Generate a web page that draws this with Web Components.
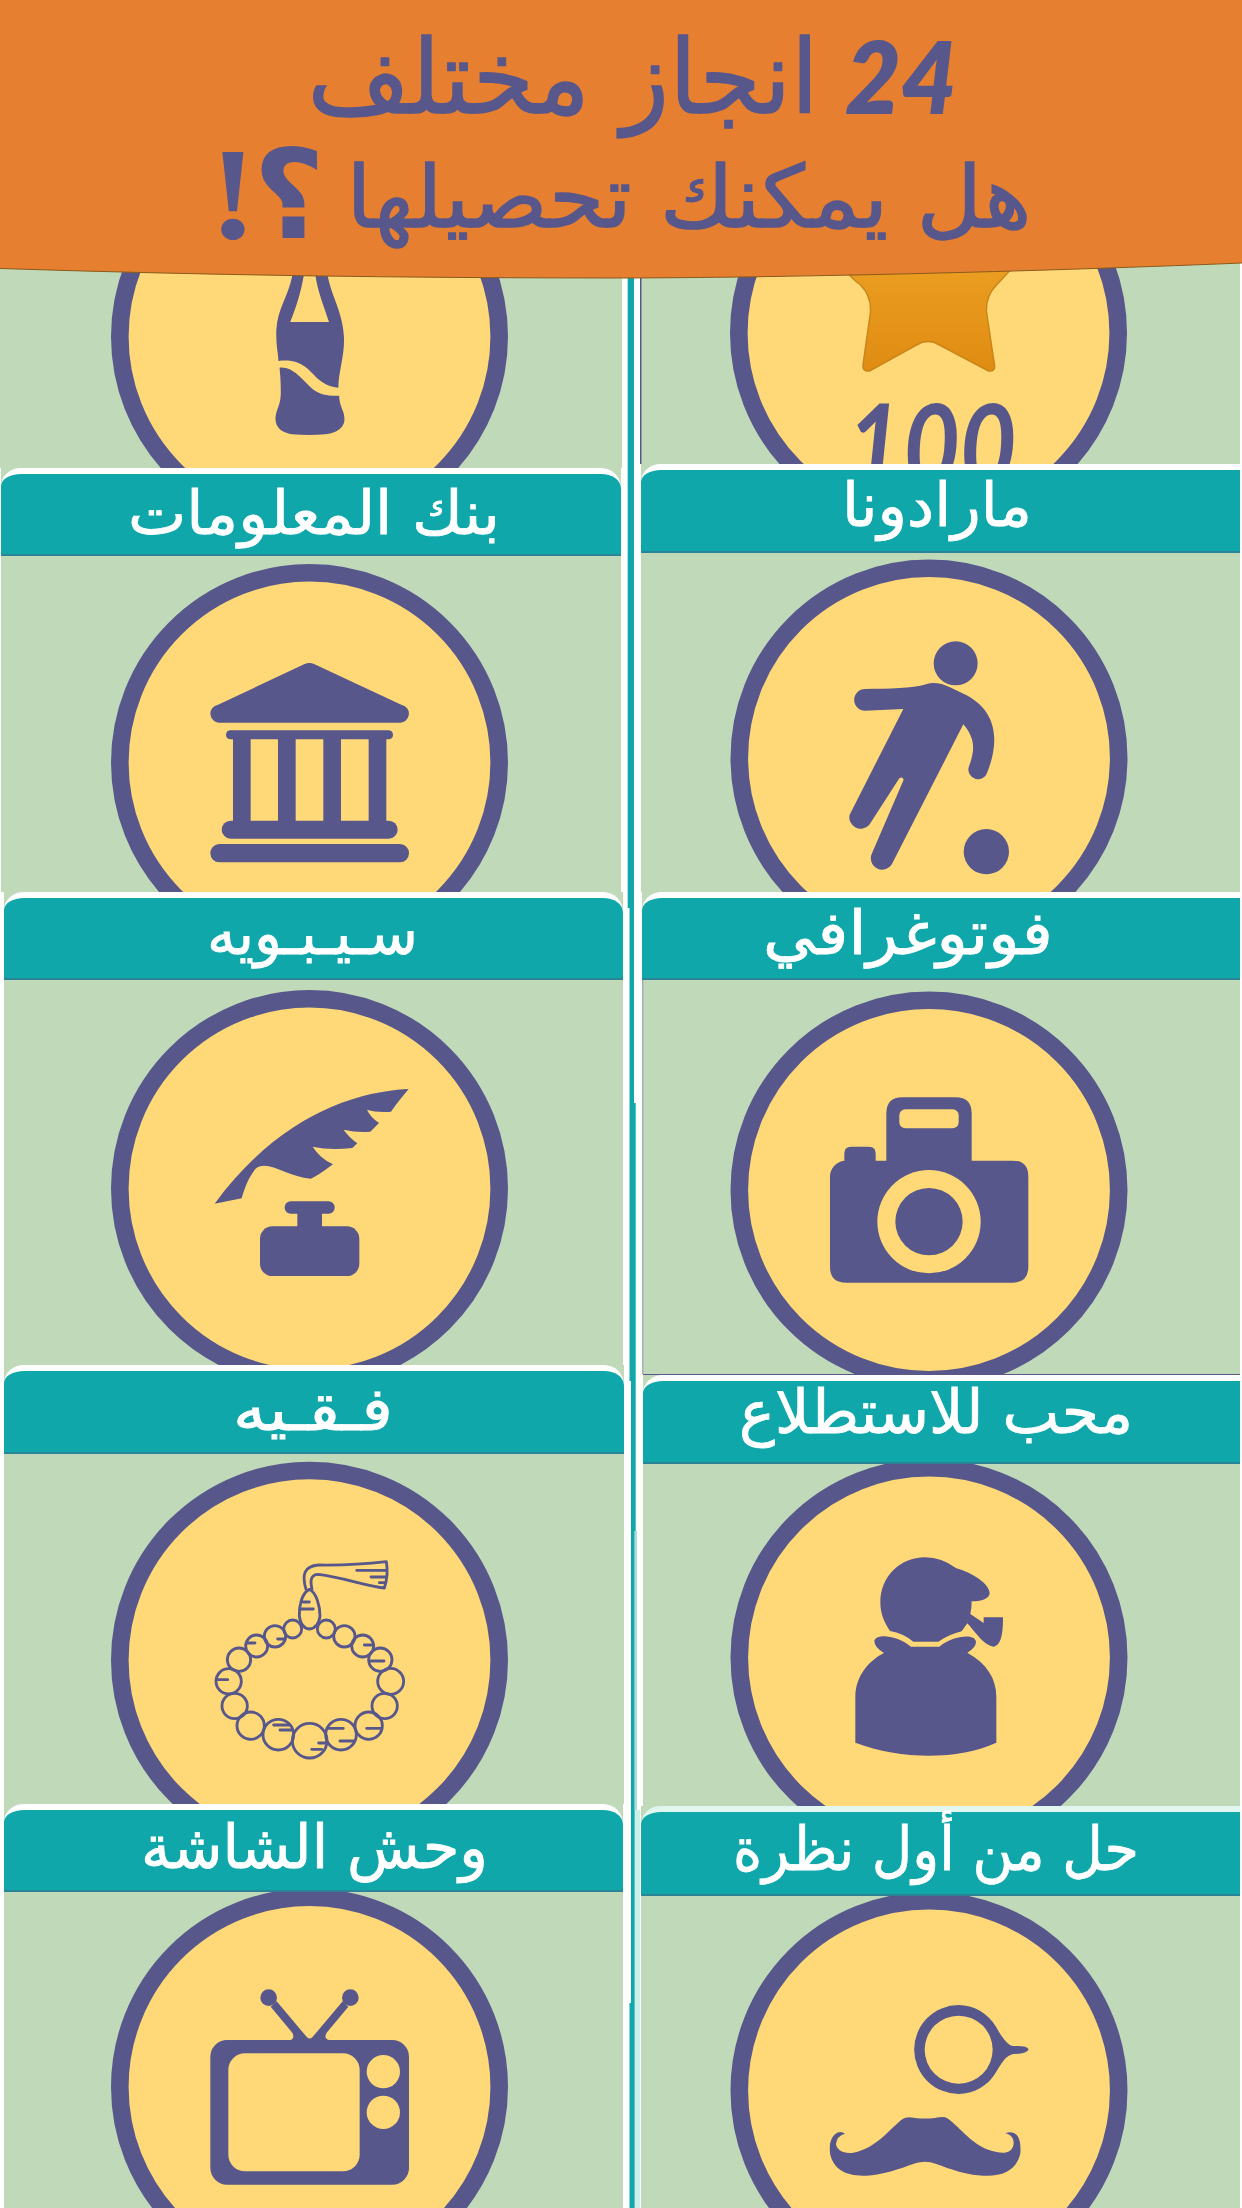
<!DOCTYPE html>
<html lang="ar">
<head>
<meta charset="utf-8">
<title>24 انجاز مختلف</title>
<style>
html,body{margin:0;padding:0;width:1242px;height:2208px;overflow:hidden;background:#fff}
body{font-family:"DejaVu Sans","Noto Sans",sans-serif}
achievement-card svg{display:block;width:100%;height:100%;fill:#57578c}
achievement-card .y{fill:#ffd977}
achievement-card .ring{fill:#ffd977;stroke:#57578c;stroke-width:17.6}
achievement-card .ln{fill:none;stroke:#57578c;stroke-width:8.500;stroke-linecap:round;stroke-linejoin:round}
</style>
</head>
<body>
<achievement-page>
  <page-banner slot="banner"></page-banner>

  <achievement-card slot="left" style="height:206px;margin-right:2px">
    <svg viewBox="0 262 622 206"><circle class="ring" cx="309.5" cy="336.5" r="189.7"/>
      <g transform="translate(0 250) scale(.40816 .33333)">
        <path d="M722 30 L716 78 C706 140 680 175 677 240 C676 290 682 310 682 333 C740 325 755 360 780 388 C800 408 815 412 829 413 C829 370 843 320 843 270 C842 190 812 140 803 78 L798 30 H768 L773 78 C778 120 792 165 806 216 H711 C728 165 738 120 744 78 L748 30Z"/>
        <path d="M685 353 C720 350 740 390 765 416 C785 435 805 438 831 437 C831 470 844 480 844 508 C844 535 822 550 797 553 Q758 557 715 553 C690 548 675 532 675 508 C675 478 688 470 688 425 C688 390 686 370 685 353Z"/>
      </g></svg>
  </achievement-card>

  <achievement-card slot="left" label="بنك المعلومات" x1="130" x2="498" base="534" size="60" box="1 468 620 88" style="height:424px;margin:0 3px 0 1px">
    <svg viewBox="1 556 620 336"><circle class="ring" cx="309.5" cy="762.5" r="189.7"/>
      <g transform="translate(100 560) scale(.33333)">
        <path d="M628 309q8 0 16 4L908 434a27 27 0 0 1 -8 54H358a27 27 0 0 1 -8 -54L612 313q8 -4 16 -4Z" transform="translate(628.500 0) scale(.985 1) translate(-628.500 0)"/>
        <rect x="378" y="511" width="501" height="27" rx="13"/>
        <path d="M399 530h53v260h-53zM534 530h53v260h-53zM670 530h53v260h-53zM806 530h53v260h-53z"/>
        <rect x="365" y="782" width="528" height="54" rx="27"/><rect x="331" y="852" width="596" height="55" rx="27"/>
      </g></svg>
  </achievement-card>

  <achievement-card slot="left" label="سـيـبـويه" x1="209" x2="416" base="954" size="60" box="4 892 619 88" style="height:473px;margin:0 1px 0 4px">
    <svg viewBox="4 980 619 385"><circle class="ring" cx="309.5" cy="1188.5" r="189.7"/>
      <g transform="translate(100 980) scale(.33333)">
        <path d="M926 327 C740 335 520 430 344 671 L425 655 C435 620 445 595 466 567 C500 535 560 590 632 596 Q650 590 699 553 Q660 535 638 500 Q690 512 757 504 L772 490 Q745 470 731 449 Q770 458 811 455 L837 429 Q810 410 801 389 Q830 398 873 395 Q890 370 926 327Z"/>
        <rect x="554" y="664" width="150" height="37" rx="18"/><path d="M592 690h74v60h-74z"/><rect x="480" y="739" width="298" height="149" rx="37"/>
      </g></svg>
  </achievement-card>

  <achievement-card slot="left" label="فـقـيه" x1="235" x2="391" base="1430" size="60" box="4 1365 620 89" style="height:439px;margin:0 0 0 4px">
    <svg viewBox="4 1454 620 350"><circle class="ring" cx="309.5" cy="1660.2" r="189.7"/>
      <g class="ln" transform="translate(100 1460) scale(.33333)">
        <path d="M618 388 C605 345 612 318 655 315 C720 316 790 313 859 305 Q866 345 853 384 C790 376 730 352 655 343 C630 343 631 365 636 388"/>
        <path d="M628 388C605 398 597 440 598 468 Q603 505 628 507 Q655 505 660 468C660 440 650 398 628 388ZM610 426h18M604 447h36M770 331h88M813 351h44M838 368h18"/>
        <circle cx="578" cy="507" r="27"/><circle cx="679" cy="507" r="27"/><circle cx="525" cy="529" r="32"/><circle cx="733" cy="529" r="32"/>
        <circle cx="470" cy="558" r="33"/><circle cx="788" cy="558" r="33"/><circle cx="417" cy="599" r="35"/><circle cx="841" cy="599" r="35"/>
        <circle cx="386" cy="664" r="38"/><circle cx="872" cy="664" r="39"/><circle cx="404" cy="738" r="38"/><circle cx="854" cy="738" r="38"/>
        <circle cx="452" cy="797" r="41"/><circle cx="806" cy="797" r="41"/><circle cx="535" cy="824" r="46"/><circle cx="723" cy="824" r="46"/><circle cx="629" cy="842" r="52"/>
        <path d="M533 537h18M441 549h24M793 555h22M813 603h39M350 659h33M521 795h47M540 810h35M682 805h48M720 843h42M800 805h45M656 849h22M635 868h30"/>
      </g></svg>
  </achievement-card>

  <achievement-card slot="left" label="وحش الشاشة" x1="143" x2="486" base="1868" size="60" box="4 1804 619 88" style="height:404px;margin:0 1px 0 4px">
    <svg viewBox="4 1892 619 316"><circle class="ring" cx="309.5" cy="2087" r="189.7"/>
      <g transform="translate(100 1800) scale(.33333)">
        <circle cx="506" cy="593" r="25"/><circle cx="751" cy="593" r="25"/>
        <path d="M512 620 L577 698 Q587 720 565 721 H695 Q668 720 680 698 L745 620 L728 604 L637 712 Q629 719 621 712 L530 604Z"/>
        <rect x="331" y="720" width="596" height="434" rx="50"/><rect class="y" x="385" y="760" width="394" height="354" rx="50"/>
        <circle class="y" cx="850" cy="815" r="50"/><circle class="y" cx="850" cy="937" r="50"/>
      </g></svg>
  </achievement-card>

  <achievement-card slot="right" style="height:202px;margin-right:2px;--edge:#57578c">
    <svg viewBox="641 262 599 202">
      <defs><linearGradient id="gold" x2="0" y2="1"><stop stop-color="#ec9f22"/><stop offset="1" stop-color="#df8c12"/></linearGradient></defs>
      <circle class="ring" cx="929" cy="333" r="189.7"/>
      <path d="M838 260 Q848 275 861 285 Q872 296 871 312 L863.5 365 Q863 372 870 371 L917 345 Q928.500 338 940 345 L989 371 Q996 372 995 365 L987 312 Q986 296 997 285 L1020 260Z" fill="url(#gold)" stroke="#c98518" stroke-width="1.500"/>
      <text x="932" y="487" text-anchor="middle" textLength="170" lengthAdjust="spacingAndGlyphs" font-family="Lato" font-size="114" font-weight="700" font-style="italic">100</text></svg>
  </achievement-card>

  <achievement-card slot="right" label="مارادونا" x1="844" x2="1030" base="526" size="60" box="641 464 599 89" style="height:428px;margin:0 2px 0 1px;--corner:0">
    <svg viewBox="641 553 599 339"><circle class="ring" cx="929" cy="758" r="189.7"/>
      <g transform="translate(720 560) scale(.33333)">
        <circle cx="707" cy="310" r="66"/><circle cx="799" cy="875" r="68"/>
        <path d="M435 387 C510 386 575 386 618 373 Q650 362 690 382 L740 406 C830 455 840 540 802 637 A29 29 0 0 1 746 622 C770 560 760 530 730 493 L517 910 A33 33 0 0 1 456 880 L551 659 Q547 648 538 655 L448 794 A34 34 0 0 1 389 764 L550 447 L435 452 A32 32 0 0 1 435 387Z"/>
      </g></svg>
  </achievement-card>

  <achievement-card slot="right" label="فوتوغرافي" x1="765" x2="1051" base="954" size="60" box="642 892 598 88" style="height:482px;margin:0 2px;--edge:#a3acba;--corner:0">
    <svg viewBox="642 980 598 394"><circle class="ring" cx="929" cy="1190" r="189.7"/>
      <g transform="translate(720 980) scale(.33333)">
        <path d="M330 590a48 48 0 0 1 43 -48V520q0 -20 20 -20h54q20 0 20 20v22h32V400q0 -48 48 -48h160q48 0 48 48V542h124q46 0 46 48v270q0 48 -48 48H378q-48 0 -48 -48Z"/>
        <rect class="y" x="538" y="388" width="178" height="57" rx="18"/><circle class="y" cx="627" cy="725" r="155"/><circle cx="627" cy="725" r="101"/>
      </g></svg>
  </achievement-card>

  <achievement-card slot="right" label="محب للاستطلاع" x1="741" x2="1131" base="1433" size="60" box="643 1375 597 89" style="height:432px;margin:0 2px 0 3px;border-top:1px solid #57578c;--corner:0">
    <svg viewBox="643 1464 597 342"><circle class="ring" cx="929" cy="1657.500" r="189.7"/>
      <g transform="translate(720 1370) scale(.33333)">
        <path d="M510 783 C495 760 481 735 481 697 C481 620 540 562 615 562 Q665 562 709 595 C760 610 805 640 809 668 Q808 693 755 694 Q755 715 751 732 L791 759 V742 H849 Q850 828 820 830 C790 825 765 785 742 760 L725 784 Q690 792 655 815 H580 Q550 790 510 783Z"/>
        <path d="M492 849 Q462 830 463 812 C470 790 530 795 573 830 H658 C700 795 765 790 768 815 Q768 832 742 848 C800 880 829 925 829 980 V1118 C715 1170 545 1170 406 1118 V980 C406 925 440 875 492 849Z"/>
      </g></svg>
  </achievement-card>

  <achievement-card slot="right" label="حل من أول نظرة" x1="735" x2="1137" base="1870" size="60" box="641 1806 599 90" style="height:402px;margin:0 2px 0 1px;--rim:#e0f6ee;--corner:0">
    <svg viewBox="641 1896 599 312"><circle class="ring" cx="929" cy="2090.500" r="189.7"/>
      <g transform="translate(720 1800) scale(.33333)">
        <path d="M716 615 C760 615 805 640 828 680 C845 712 865 738 880 738 Q922 736 926 748 Q922 762 880 762 C860 765 845 787 828 817 C805 858 760 882 716 882 A133.500 133.500 0 0 1 716 615Z"/><circle class="y" cx="716" cy="749" r="102"/>
        <path d="M375 1001 Q360 990 345 1003 C330 1018 328 1035 330 1060 C340 1110 380 1130 440 1127 C530 1120 575 1085 616 1085 C655 1085 700 1122 790 1127 C850 1130 890 1110 901 1060 C904 1025 895 1005 882 999 Q868 994 856 1000 C880 1005 884 1025 879 1040 C870 1060 850 1060 830 1056 C760 1045 720 980 682 955 Q672 948 645 954 Q615 957 585 954 Q560 948 548 957 C510 985 470 1045 400 1058 C370 1062 350 1050 348 1032 Q350 1008 375 1001Z"/>
      </g></svg>
  </achievement-card>
</achievement-page>

<script>
class AchievementPage extends HTMLElement{
  constructor(){super();this.attachShadow({mode:'open'}).innerHTML=`
  <style>
    :host{display:flex;flex-direction:column;width:1242px;height:2208px;overflow:hidden}
    .cols{display:grid;grid-template-columns:624px 16px 602px;height:1946px}
    .col{display:flex;flex-direction:column;background:#fdfffc;min-width:0}
  </style>
  <slot name="banner"></slot>
  <div class="cols">
    <div class="col"><slot name="left"></slot></div>
    <column-rule></column-rule>
    <div class="col"><slot name="right"></slot></div>
  </div>`}
}
class ColumnRule extends HTMLElement{
  constructor(){super();this.attachShadow({mode:'open'}).innerHTML=`
  <style>:host{display:block}svg{display:block}</style>
  <svg width="16" height="1946" viewBox="624 262 16 1946">
    <path fill="#fff" d="M624 262h16v1946h-16z"/>
    <path fill="#cdeee9" d="M634 1810h6v398h-6z"/>
    <path fill="#aeddd9" d="M635 1531h2v279h-2z"/>
    <path fill="#10a7ab" d="M627.700 262H634V1103H635.700V1531H634.600V2208H629.500V2003H631V1381H629.500V908H627.700Z"/>
  </svg>`}
}
class PageBanner extends HTMLElement{
  constructor(){super();this.attachShadow({mode:'open'}).innerHTML=`
  <style>
    :host{display:block;height:262px;position:relative;z-index:2}
    svg{display:block;overflow:visible}
    text{fill:#57578c;text-anchor:middle}
    .ar{direction:rtl;font-family:"DejaVu Sans",sans-serif}
    .line{stroke:#57578c;stroke-width:1.500px}
  </style>
  <svg width="1242" height="280" viewBox="0 0 1242 280">
    <path fill="#e67f30" d="M0 0H1242V263C1000 273 750 278 610 278C400 278 200 275 0 268.500Z"/>
    <path fill="none" stroke="#8a5a1c" stroke-width="1" d="M1242 263C1000 273 750 278 610 278C400 278 200 275 0 268.500"/>
    <text x="901" y="114" font-family="Lato" font-weight="800" font-style="italic" font-size="100" textLength="112" lengthAdjust="spacingAndGlyphs">24</text>
    <text class="ar line" x="563" y="113" font-size="102" textLength="511" lengthAdjust="spacingAndGlyphs">انجاز مختلف</text>
    <text class="ar line" x="689" y="226.500" font-size="86" textLength="685" lengthAdjust="spacingAndGlyphs">هل يمكنك تحصيلها</text>
    <text class="ar" x="289" y="238" font-size="124" font-weight="700" textLength="72" lengthAdjust="spacingAndGlyphs">؟</text>
    <text x="233" y="238" font-family="Liberation Serif" font-weight="700" font-size="132" textLength="48" lengthAdjust="spacingAndGlyphs">!</text>
  </svg>`}
}
class AchievementCard extends HTMLElement{
  constructor(){super();this.attachShadow({mode:'open'})}
  connectedCallback(){
    const a=n=>this.getAttribute(n);
    let head='';
    if(a('label')){
      const [bx,by,bw,bh]=a('box').split(' ').map(Number);
      const x1=+a('x1'),x2=+a('x2');
      head=`<header style="height:${bh}px"><svg width="${bw}" height="${bh}" viewBox="${bx} ${by} ${bw} ${bh}">
        <text x="${(x1+x2)/2}" y="${a('base')}" font-size="${a('size')}" textLength="${x2-x1+4}" lengthAdjust="spacingAndGlyphs">${a('label')}</text></svg></header>`;
    }
    this.shadowRoot.innerHTML=`
    <style>
      :host{display:flex;flex-direction:column;flex:none;box-sizing:border-box;overflow:hidden;background:#c0dab9}
      header{flex:none;position:relative;box-sizing:border-box;background:#10a7ab;border-top:6px solid var(--rim,#fff);border-bottom:2px solid #2b8596;border-top-left-radius:20px 18px;border-top-right-radius:var(--corner,20px)}
      header svg{display:block;margin-top:-6px;overflow:visible}
      text{fill:#fff;stroke:#fff;stroke-width:.8px;text-anchor:middle;direction:rtl;font-family:"DejaVu Sans",sans-serif}
      .pic{flex:1;min-height:0;overflow:hidden;box-shadow:inset 1.500px 0 var(--edge,transparent)}
    </style>${head}<div class="pic"><slot></slot></div>`;
  }
}
customElements.define('column-rule',ColumnRule);
customElements.define('page-banner',PageBanner);
customElements.define('achievement-card',AchievementCard);
customElements.define('achievement-page',AchievementPage);
</script>
</body>
</html>
